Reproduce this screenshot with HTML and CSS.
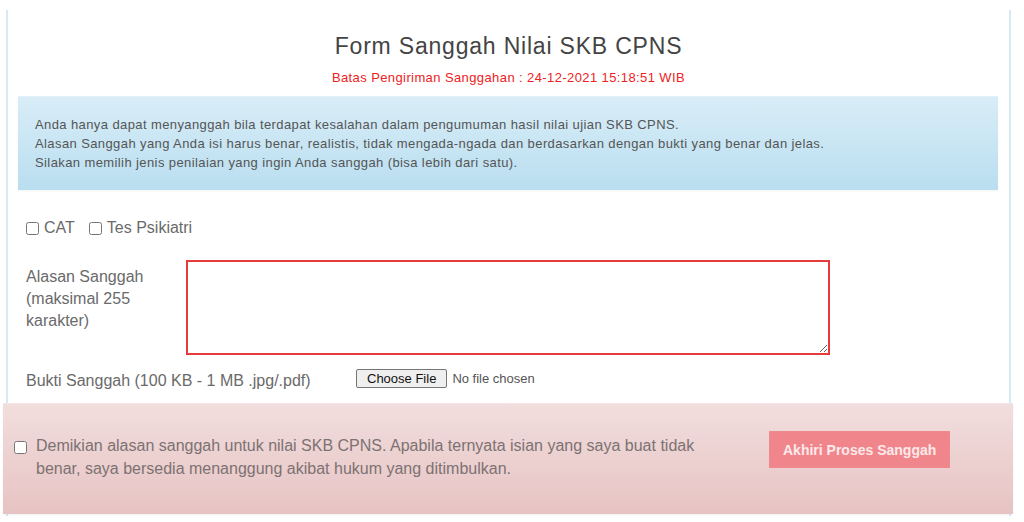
FILE: index.html
```html
<!DOCTYPE html>
<html lang="id">
<head>
<meta charset="utf-8">
<title>Form Sanggah Nilai SKB CPNS</title>
<link rel="stylesheet" href="styles.css">
</head>
<body>
<div class="panel">
  <h3 class="title">Form Sanggah Nilai SKB CPNS</h3>
  <p class="deadline">Batas Pengiriman Sanggahan : 24-12-2021 15:18:51 WIB</p>
  <div class="info">
    Anda hanya dapat menyanggah bila terdapat kesalahan dalam pengumuman hasil nilai ujian SKB CPNS.<br>
    Alasan Sanggah yang Anda isi harus benar, realistis, tidak mengada-ngada dan berdasarkan dengan bukti yang benar dan jelas.<br>
    Silakan memilih jenis penilaian yang ingin Anda sanggah (bisa lebih dari satu).
  </div>
  <form class="form">
    <div class="choices">
      <label class="choice"><input type="checkbox"> CAT</label>
      <label class="choice"><input type="checkbox"> Tes Psikiatri</label>
    </div>
    <div class="row reason-row">
      <label class="lbl">Alasan Sanggah (maksimal 255 karakter)</label>
      <textarea class="reason"></textarea>
    </div>
    <div class="row file-row">
      <label class="lbl wide">Bukti Sanggah (100 KB - 1 MB .jpg/.pdf)</label>
      <input class="file" type="file">
    </div>
  </form>
  <div class="confirm">
    <input class="agree" type="checkbox">
    <p class="statement">Demikian alasan sanggah untuk nilai SKB CPNS. Apabila ternyata isian yang saya buat tidak benar, saya bersedia menanggung akibat hukum yang ditimbulkan.</p>
    <button class="submit" type="button">Akhiri Proses Sanggah</button>
  </div>
</div>
</body>
</html>
```

FILE: styles.css
```css
html, body {
  margin: 0;
  padding: 0;
  background: #fff;
}
body {
  font-family: "Liberation Sans", Arial, sans-serif;
  color: #6a6a6a;
}
.panel {
  box-sizing: border-box;
  width: 1005px;
  margin: 10px 0 0 6px;
  padding: 24px 0 2px;
  border-left: 2px solid #d4eaf5;
  border-right: 2px solid #d4eaf5;
}
.title {
  margin: 0;
  text-align: center;
  font-size: 23px;
  letter-spacing: 0.8px;
  line-height: 24px;
  font-weight: normal;
  color: #444;
}
.deadline {
  margin: 11px 0 0;
  text-align: center;
  font-size: 13px;
  letter-spacing: 0.4px;
  line-height: 17px;
  color: #ee2222;
}
.info {
  margin: 10px 11px 0 10px;
  padding: 19px 16px 18px 17px;
  font-size: 13px;
  letter-spacing: 0.4px;
  line-height: 19px;
  color: #555;
  background: linear-gradient(to bottom, #d9edf7 0%, #b9def0 100%);
  box-shadow: inset 0 1px 0 rgba(255,255,255,.25), 0 1px 2px rgba(0,0,0,.05);
}
.form {
  padding: 0 18px;
}
.choices {
  margin-top: 27px;
  display: flex;
  gap: 14px;
  font-size: 16px;
  line-height: 22px;
}
.choice {
  display: flex;
  align-items: center;
}
.choice input {
  margin: 0 5px 0 0;
  width: 13px;
  height: 13px;
}
.row {
  display: flex;
  align-items: flex-start;
  font-size: 16px;
  line-height: 22px;
}
.reason-row {
  margin-top: 21px;
}
.lbl {
  box-sizing: border-box;
  width: 160px;
  padding: 6px 15px 0 0;
}
.lbl.wide {
  width: 330px;
  padding-top: 0;
}
.reason {
  box-sizing: border-box;
  width: 644px;
  height: 95px;
  margin: 0;
  border: 2px solid #e63b3b;
  resize: both;
  font-family: inherit;
}
.file-row {
  margin-top: 15px;
}
.file {
  margin-top: -1px;
  font-family: "Liberation Sans", Arial, sans-serif;
  font-size: 13px;
  line-height: 18px;
  color: #555;
}
.file::file-selector-button {
  font-family: "Liberation Sans", Arial, sans-serif;
  font-size: 13px;
  height: 19px;
  padding: 0 10px;
  margin-right: 5px;
  border: 1px solid #767676;
  border-radius: 2px;
  background: #efefef;
  color: #111;
}
.confirm {
  display: flex;
  align-items: flex-start;
  margin: 11px -4px 0 -5px;
  padding: 28px 0 34px 11px;
  background: linear-gradient(to bottom, #f2dede 0%, #e7c3c3 100%);
  box-shadow: inset 0 1px 0 rgba(255,255,255,.25), 0 1px 2px rgba(0,0,0,.05);
}
.agree {
  margin: 10px 9px 0 0;
  width: 13px;
  height: 13px;
}
.statement {
  margin: 3px 0 0;
  width: 670px;
  font-size: 16px;
  line-height: 23px;
  color: #7c7272;
}
.submit {
  margin-left: 63px;
  height: 37px;
  padding: 0 13px;
  border: 1px solid #ee8a8f;
  background: #f0868c;
  color: #fde9ea;
  font-family: "Liberation Sans", Arial, sans-serif;
  font-weight: bold;
  font-size: 14px;
}
```
